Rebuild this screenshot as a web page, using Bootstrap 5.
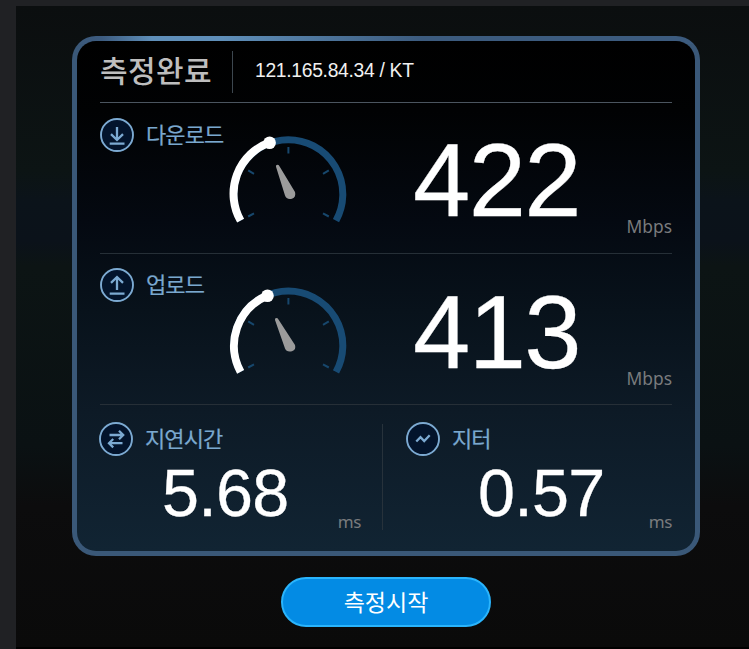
<!DOCTYPE html>
<html lang="ko">
<head>
<meta charset="utf-8">
<meta name="viewport" content="width=device-width, initial-scale=1">
<title>측정완료</title>
<link href="https://cdn.jsdelivr.net/npm/bootstrap@5.3.0/dist/css/bootstrap.min.css" rel="stylesheet">
<style>
body{background:#202124;font-family:"Noto Sans CJK KR","Noto Sans",sans-serif;height:649px;overflow:hidden;padding:6px 0 0 16px}
.stage{height:643px;padding:30px 49px 0 56px;background:linear-gradient(#0b0e0f 0,#0c1414 165px,#0b131a 195px,#0b121a 235px,#0c1414 260px,#0a1113 440px,#0c0c0d 500px,#0a0a0a 641px,#000 641px)}
.panel{height:520px;border:5px solid transparent;border-radius:24px;padding:0 23px;
background:linear-gradient(#000 0,#010203 70px,#040911 180px,#08121b 270px,#0d1a26 370px,#112433 510px) padding-box,
linear-gradient(90deg,#3b5879 0,#3d5c80 30px,#5f8fb9 80px,#5f8fb9 150px,#3c5b7e 350px,#3c5b7e) top/100% 8px no-repeat border-box,#3a5878 border-box}
.head{height:62px;border-bottom:1px solid #4b555f}
.headline{font-size:30px;font-weight:500;line-height:1;color:#bebebe;letter-spacing:.4px;padding-bottom:6px}
.rule{width:1px;height:42px;background:#3d474f}
.head .rule{margin:0 22px 0 20px}
.addr{font:19.3px "Liberation Sans",sans-serif;color:#f1f1f1;letter-spacing:-.3px;padding-bottom:1px}
.meter{height:151px;border-bottom:1px solid #262f37}
.label-col{width:128px;padding-top:15px}
.meter-up .label-col{padding-top:14px}
.badge-icon{width:34px;height:34px;flex:none;fill:none;stroke:#7caad2;stroke-width:2.3}
.badge-icon circle{fill:#03142c;stroke-width:1.9}
.tag{font-size:22px;line-height:30px;letter-spacing:-.9px;color:#7aa8cf;white-space:nowrap;-webkit-text-stroke:.2px}
.dial{width:120px;height:100px;flex:none;margin-top:29px}
.num{font-family:"Liberation Sans",sans-serif;color:#fff;line-height:1;white-space:nowrap}
.num-xl{font-size:103px;letter-spacing:-1.6px;margin-left:65px;padding-top:26px;-webkit-text-stroke:.3px}
.meter-up .num-xl{padding-top:27px}
.num-md{font-size:66.5px;letter-spacing:-.7px;padding-top:4px;-webkit-text-stroke:.3px}
.lag .num-md{margin-left:62px}
.jit .num-md{margin-left:71px}
.unit{font-family:"Noto Sans",sans-serif;font-size:17.4px;line-height:20px;color:#797b7d}
.meter .unit{padding-bottom:17px}
.meter-up .unit{padding-bottom:16px}
.foot{height:146px}
.foot .unit{margin-bottom:-5px;font-size:17px;letter-spacing:-.4px}
.lag{width:282px;padding-top:17px}
.lag .unit{margin-right:21px}
.jit{padding:17px 0 0 24px}
.icon-line{margin-left:-1px}
.foot .rule{height:106px;margin-top:19px;background:#27323b}
.start-row{margin-top:21px}
.start{width:210px;height:50px;background:#038be4;border:2px solid #2ab4fc;color:#fff;font-size:23px;line-height:1}
.start span{display:block;padding-bottom:2px}
</style>
</head>
<body>
<main class="stage">
<section class="panel">
  <header class="head d-flex align-items-center">
    <h1 class="headline m-0">측정완료</h1>
    <span class="rule"></span>
    <span class="addr">121.165.84.34 / KT</span>
  </header>

  <div class="meter d-flex">
    <div class="label-col d-flex align-items-start gap-2">
      <svg class="badge-icon" viewBox="0 0 34 34"><circle cx="17" cy="17" r="16"/><path d="M17 9V21M11 16.2L17 22L23 16.2M9.7 25.6H24.5"/></svg>
      <span class="tag ps-1">다운로드</span>
    </div>
    <svg class="dial" viewBox="228 132 120 100" fill="none">
      <path d="M240.6 220.6A54.5 54.5 0 1 1 336 220.6" stroke="#184b74" stroke-width="7"/>
      <path d="M240.6 220.6A54.5 54.5 0 0 1 269.5 142.5" stroke="#fff" stroke-width="8"/>
      <circle cx="269.6" cy="142.8" r="6.3" fill="#fff"/>
      <path d="M288.4 147V153.5M323 173.8L328.8 170.3M323 213.3L328.8 216.5M254 173.8L248.2 170.3M254 213.3L248.2 216.5" stroke="#17476c" stroke-width="2"/>
      <path d="M276 166.7Q275.5 164.7 277.5 164.7Q278.7 164.7 279.3 166L295 192Q296.4 197 292 198.7Q286.5 200 285 195.5Z" fill="#9b9b9b"/>
    </svg>
    <div class="num num-xl">422</div>
    <div class="unit ms-auto align-self-end">Mbps</div>
  </div>

  <div class="meter meter-up d-flex">
    <div class="label-col d-flex align-items-start gap-2">
      <svg class="badge-icon" viewBox="0 0 34 34"><circle cx="17" cy="17" r="16"/><path d="M17 22V9.5M11 14.8L17 9L23 14.8M9.7 25.6H24.5"/></svg>
      <span class="tag ps-1">업로드</span>
    </div>
    <svg class="dial" viewBox="228 283 120 100" fill="none">
      <path d="M240.6 371.9A54.5 54.5 0 1 1 336 371.9" stroke="#184b74" stroke-width="7"/>
      <path d="M240.6 371.9A54.5 54.5 0 0 1 267.5 295.5" stroke="#fff" stroke-width="8"/>
      <circle cx="267.5" cy="295.8" r="6.3" fill="#fff"/>
      <path d="M288.4 298V304.5M323 324.8L328.8 321.3M323 364.3L328.8 367.5M254 324.8L248.2 321.3M254 364.3L248.2 367.5" stroke="#17476c" stroke-width="2"/>
      <path d="M275 320Q274.5 318 276.5 318Q277.7 318 278.3 319.3L295 345Q296.4 350 292 351.2Q286.5 352.4 285 348.5Z" fill="#9b9b9b"/>
    </svg>
    <div class="num num-xl">413</div>
    <div class="unit ms-auto align-self-end">Mbps</div>
  </div>

  <div class="foot d-flex">
    <div class="lag d-flex flex-column">
      <div class="icon-line d-flex gap-2">
        <svg class="badge-icon" viewBox="0 0 34 34"><circle cx="17" cy="17" r="16"/><path d="M10.500 13H24M20 8.800L24.200 13L20 17.200M23.500 21.200H10M14.200 17L10 21.200L14.200 25.400"/></svg>
        <span class="tag ps-1">지연시간</span>
      </div>
      <div class="d-flex align-items-end">
        <span class="num num-md">5.68</span>
        <span class="unit ms-auto">ms</span>
      </div>
    </div>
    <span class="rule"></span>
    <div class="jit flex-grow-1 d-flex flex-column">
      <div class="icon-line d-flex gap-2">
        <svg class="badge-icon" viewBox="0 0 34 34"><circle cx="17" cy="17" r="16"/><path d="M10.3 19.5L14.5 15.2L18.2 19L23.7 13.3"/></svg>
        <span class="tag ps-1">지터</span>
      </div>
      <div class="d-flex align-items-end">
        <span class="num num-md">0.57</span>
        <span class="unit ms-auto">ms</span>
      </div>
    </div>
  </div>
</section>
<div class="start-row d-flex justify-content-center">
  <button type="button" class="btn start rounded-pill p-0"><span>측정시작</span></button>
</div>
</main>
<script src="https://cdn.jsdelivr.net/npm/bootstrap@5.3.0/dist/js/bootstrap.bundle.min.js"></script>
</body>
</html>
